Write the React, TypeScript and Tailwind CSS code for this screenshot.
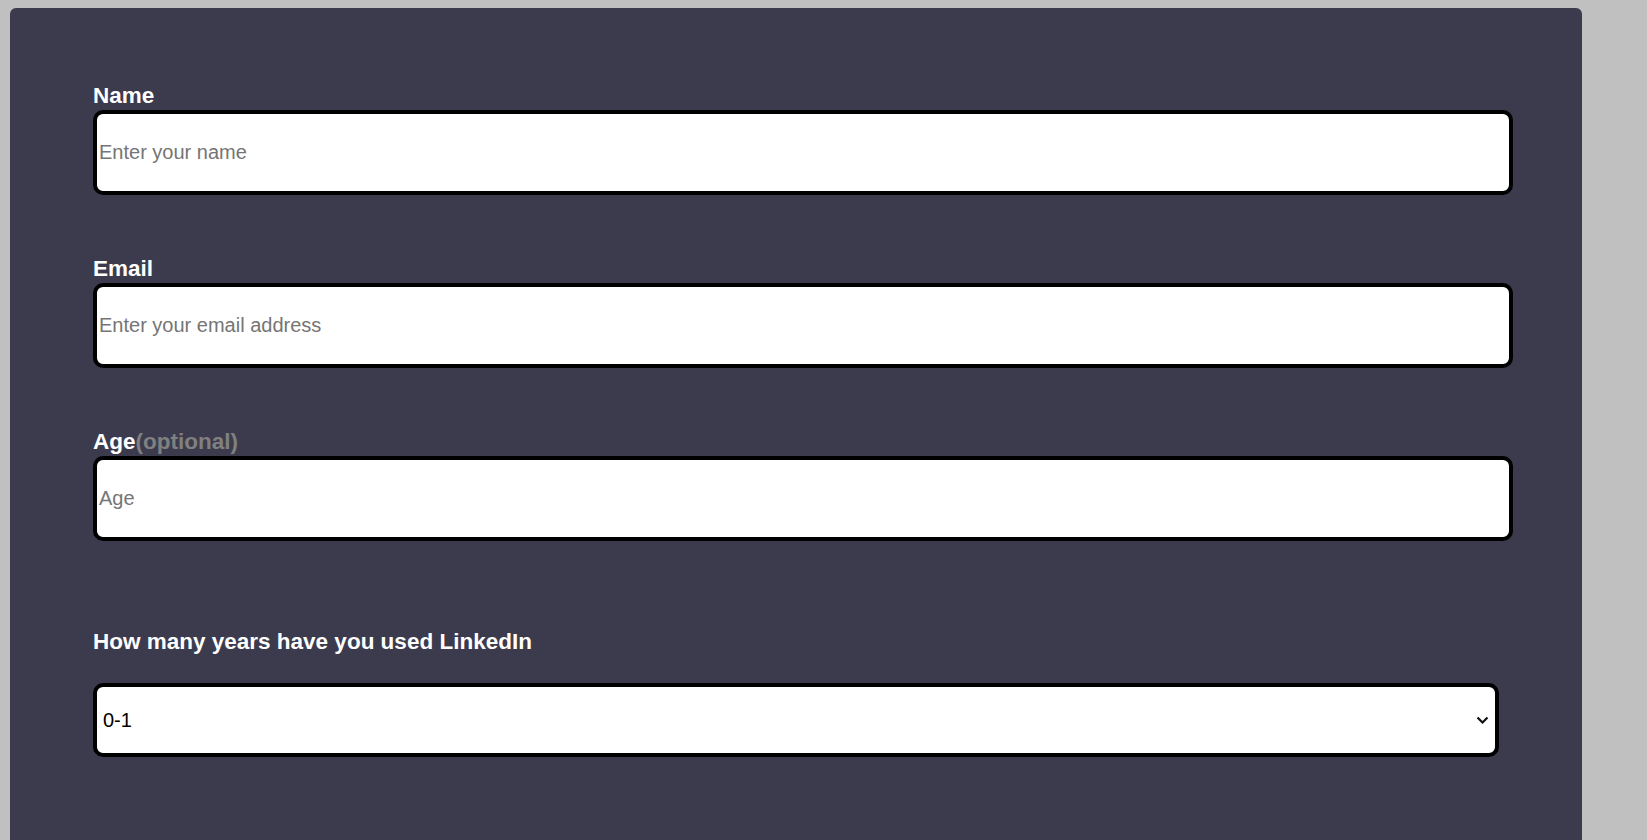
import React from "react";

const font = { fontFamily: '"Liberation Sans", Arial, sans-serif' };

const Field = ({
  label,
  hint,
  placeholder,
  className,
}: {
  label: string;
  hint?: string;
  placeholder: string;
  className?: string;
}) => (
  <div className={className}>
    <label className="block text-[22.5px] leading-[25px] font-bold text-white">
      {label}
      {hint && <span className="text-[#808080]">{hint}</span>}
    </label>
    <input
      type="text"
      placeholder={placeholder}
      className="mt-[2px] block w-[1420px] h-[85px] bg-white border-4 border-black rounded-[10px] px-[2px] text-[20px] text-black placeholder:text-[#757575] outline-none"
    />
  </div>
);

const App = () => {
  return (
    <div className="min-h-screen bg-[#c0c0c0] pt-[8px] pl-[10px] overflow-hidden" style={font}>
      <div className="w-[1572px] bg-[#3c3b4e] rounded-md pt-[75px] pl-[83px] pb-[120px]">
        <Field label="Name" placeholder="Enter your name" />
        <Field label="Email" placeholder="Enter your email address" className="mt-[61px]" />
        <Field label="Age" hint="(optional)" placeholder="Age" className="mt-[61px]" />

        <div className="mt-[88px]">
          <label className="block text-[22.5px] leading-[25px] font-bold text-white">
            How many years have you used LinkedIn
          </label>
          <div className="relative mt-[29px] w-[1406px]">
            <select className="block w-full h-[74px] appearance-none bg-white border-4 border-black rounded-[10px] pl-[6px] text-[20px] text-black outline-none">
              <option>0-1</option>
              <option>1-3</option>
              <option>3-5</option>
              <option>5+</option>
            </select>
            <svg
              className="absolute right-[10px] top-1/2 -translate-y-1/2 pointer-events-none"
              width="13"
              height="8"
              viewBox="0 0 13 8"
              fill="none"
            >
              <path d="M1.5 1.5l5 5 5-5" stroke="#111" strokeWidth="2.2" />
            </svg>
          </div>
        </div>
      </div>
    </div>
  );
};

export default App;
